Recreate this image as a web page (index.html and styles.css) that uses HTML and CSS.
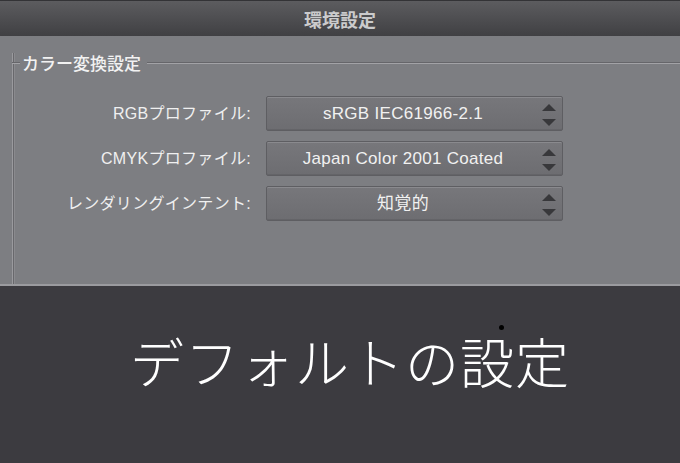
FILE: index.html
```html
<!DOCTYPE html>
<html lang="ja">
<head>
<meta charset="utf-8">
<link rel="stylesheet" href="styles.css">
</head>
<body>
<div class="window">
  <div class="titlebar">環境設定</div>
  <div class="content">
    <div class="group">
      <div class="group-head">
        <span class="line line-short"></span>
        <span class="legend">カラー変換設定</span>
        <span class="line line-long"></span>
      </div>
      <div class="group-body">
        <div class="row">
          <div class="label">RGBプロファイル:</div>
          <div class="select"><span class="value">sRGB IEC61966-2.1</span>
            <svg class="arrows" width="16" height="22" viewBox="0 0 16 22"><path d="M1 7 L8 0 L15 7 Z" /><path d="M1 15 L15 15 L8 22 Z" /></svg>
          </div>
        </div>
        <div class="row">
          <div class="label">CMYKプロファイル:</div>
          <div class="select"><span class="value">Japan Color 2001 Coated</span>
            <svg class="arrows" width="16" height="22" viewBox="0 0 16 22"><path d="M1 7 L8 0 L15 7 Z" /><path d="M1 15 L15 15 L8 22 Z" /></svg>
          </div>
        </div>
        <div class="row">
          <div class="label">レンダリングインテント:</div>
          <div class="select"><span class="value">知覚的</span>
            <svg class="arrows" width="16" height="22" viewBox="0 0 16 22"><path d="M1 7 L8 0 L15 7 Z" /><path d="M1 15 L15 15 L8 22 Z" /></svg>
          </div>
        </div>
      </div>
    </div>
  </div>
  <div class="caption">
    <span class="caption-text">デフォルトの設定</span>
    <span class="dot"></span>
  </div>
</div>
</body>
</html>
```

FILE: styles.css
```css
html, body {
  margin: 0;
  padding: 0;
}
body {
  width: 680px;
  height: 463px;
  overflow: hidden;
  background: #3c3b40;
  font-family: "Liberation Sans", "Noto Sans CJK JP", sans-serif;
}
.window {
  display: flex;
  flex-direction: column;
  height: 463px;
}
.titlebar {
  height: 36px;
  box-sizing: border-box;
  border-top: 1px solid #333336;
  background: linear-gradient(#5c5c5f, #404043);
  color: #cbcbcc;
  font-family: "Noto Sans CJK JP", sans-serif;
  font-size: 18px;
  font-weight: 600;
  display: flex;
  align-items: center;
  justify-content: center;
  line-height: 1;
}
.content {
  height: 250px;
  box-sizing: border-box;
  background: #7d7e82;
  border-bottom: 2px solid #9b9b9f;
  padding-top: 17px;
  display: flex;
  flex-direction: column;
}
.group {
  flex: 1;
  margin-left: 12px;
  border-left: 1px solid #9a9a9e;
  box-shadow: inset 1px 0 0 #68686c, inset 2px 0 0 #8a8a8e;
  display: flex;
  flex-direction: column;
}
.group-head {
  display: flex;
  align-items: center;
  height: 19px;
  margin-left: -1px;
}
.line {
  height: 1px;
  border-top: 1px solid #66666a;
  background: #a2a2a6;
}
.line-short {
  width: 8px;
}
.line-long {
  flex: 1;
  margin-left: 6px;
}
.legend {
  color: #f2f2f2;
  font-family: "Noto Sans CJK JP", sans-serif;
  font-size: 17px;
  font-weight: 500;
  line-height: 1;
  margin-left: 2px;
}
.group-body {
  padding-top: 24px;
  display: flex;
  flex-direction: column;
  gap: 10px;
}
.row {
  display: flex;
  align-items: center;
  gap: 15px;
}
.label {
  width: 238px;
  text-align: right;
  color: #f0f0f0;
  font-size: 16px;
  letter-spacing: 0.3px;
  line-height: 1;
}
.select {
  width: 297px;
  height: 35px;
  box-sizing: border-box;
  border: 1px solid #5e5e62;
  border-radius: 2px;
  background: linear-gradient(#77777b, #6d6d71);
  box-shadow: inset 0 1px 0 #8a8a8e, inset 0 -1px 0 #646468;
  display: flex;
  align-items: center;
  position: relative;
  padding-right: 23px;
}
.value {
  flex: 1;
  text-align: center;
  color: #f1f1f1;
  font-size: 17px;
  letter-spacing: 0.3px;
  line-height: 1;
}
.arrows {
  position: absolute;
  right: 5px;
  top: 7px;
  fill: #38383b;
}
.caption {
  flex: 1;
  position: relative;
  display: flex;
  align-items: center;
  justify-content: center;
  padding-left: 20px;
  padding-bottom: 28px;
}
.caption-text {
  color: #ffffff;
  font-family: "Noto Sans CJK JP", sans-serif;
  font-weight: 300;
  font-size: 54px;
  letter-spacing: 1px;
  line-height: 1;
}
.dot {
  position: absolute;
  left: 499px;
  top: 39px;
  width: 5px;
  height: 5px;
  border-radius: 50%;
  background: #000;
}
```
